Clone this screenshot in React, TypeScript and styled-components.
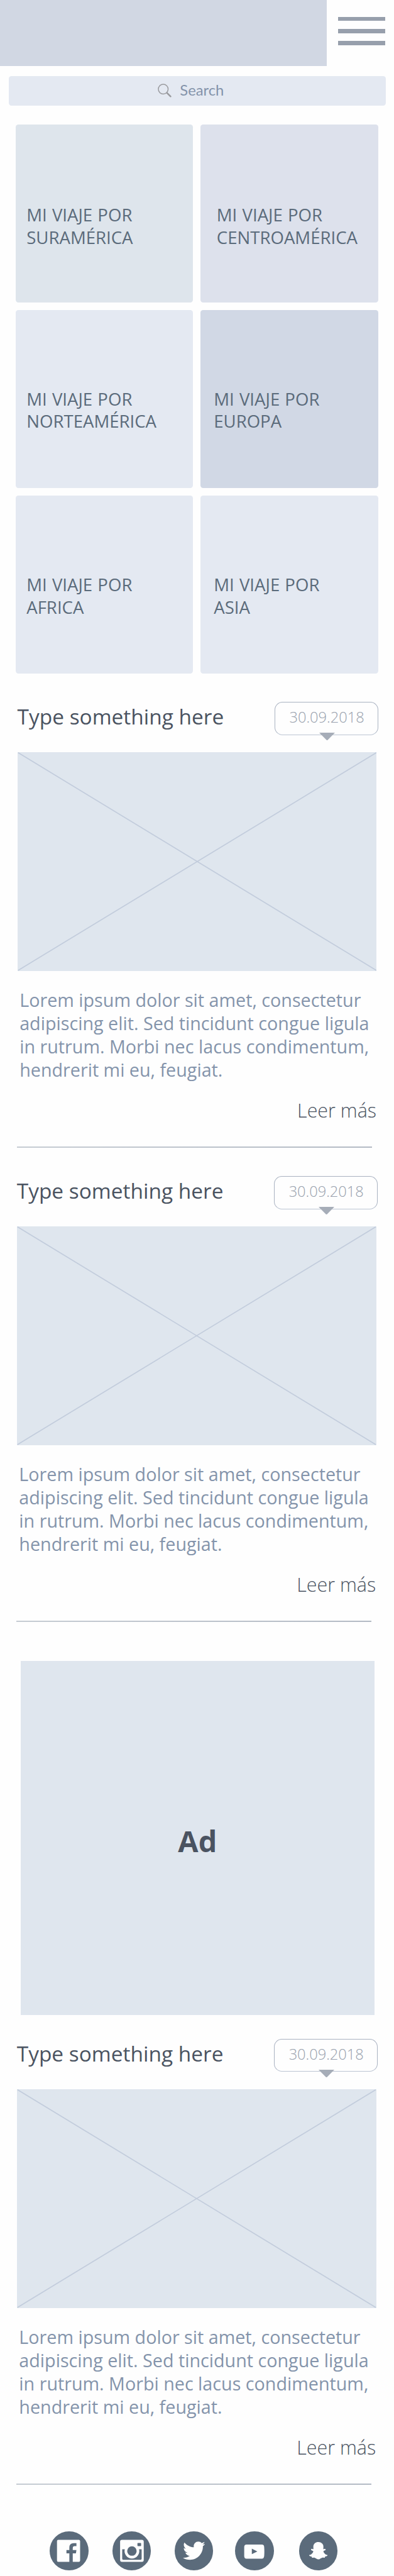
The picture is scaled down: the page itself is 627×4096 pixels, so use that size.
import React from "react";
import styled, { createGlobalStyle } from "styled-components";
import { FaTwitter, FaSnapchatGhost } from "react-icons/fa";

/* Design units are for a 750-wide artboard, drawn on a 627px page. */
const u = (n: number) => `${+(n * 0.836).toFixed(3)}px`;

const GlobalStyle = createGlobalStyle`
  * { box-sizing: border-box; }
  body { margin: 0; background: #fefefe; font-family: "Open Sans", "Noto Sans", sans-serif; }
  h1, h2, p { margin: 0; font-weight: 400; }
`;

const Page = styled.div`
  width: 627px;
  height: 4096px;
  overflow: hidden;
  background: #fefefe;
`;

const Header = styled.header`
  display: flex;
  height: ${u(126)};
`;

const Banner = styled.div`
  width: ${u(622)};
  background: #d1d7e3;
`;

const MenuButton = styled.button`
  display: flex;
  flex-direction: column;
  gap: ${u(15)};
  margin: 0 0 0 ${u(21)};
  padding: ${u(32)} 0 0;
  width: ${u(90)};
  border: 0;
  background: none;
`;

const MenuBar = styled.span`
  height: ${u(8)};
  background: #979fac;
`;

const SearchBar = styled.div`
  display: flex;
  align-items: center;
  width: ${u(717)};
  height: ${u(55.5)};
  margin: ${u(19)} 0 0 ${u(17)};
  padding-left: ${u(283.5)};
  border-radius: ${u(5)};
  background: #e4e9f2;
`;

const SearchIcon = styled.svg`
  width: ${u(27)};
  height: ${u(27)};
  fill: none;
  stroke: #9a9b9f;
`;

const SearchLabel = styled.span`
  margin: 0 0 ${u(3.5)} ${u(15)};
  font-family: Lato, "Open Sans", sans-serif;
  font-size: ${u(28.5)};
  line-height: ${u(50)};
  color: #8494ab;
`;

const Tiles = styled.nav`
  display: grid;
  grid-template-columns: ${u(338)} ${u(338)};
  grid-auto-rows: ${u(338)};
  column-gap: ${u(14.5)};
  row-gap: ${u(15)};
  margin: ${u(36.5)} 0 0 ${u(29.5)};
`;

const Tile = styled.a<{ $bg: string; $left: number; $top: number }>`
  padding: ${(p) => u(p.$top)} 0 0 ${(p) => u(p.$left)};
  border-radius: ${u(5)};
  background: ${(p) => p.$bg};
  color: #5b6b7b;
  font-size: ${u(33)};
  line-height: ${u(42.2)};
  word-spacing: ${u(1.2)};
  white-space: pre-line;
`;

const Article = styled.article<{ $gap: number; $shift?: number }>`
  margin: ${(p) => u(p.$gap)} 0 0 ${(p) => u(33 - (p.$shift || 0))};
  width: ${u(687)};
`;

const ArticleHead = styled.div`
  display: flex;
  justify-content: space-between;
  height: ${u(96)};
`;

const Title = styled.h2`
  font-size: ${u(40)};
  line-height: ${u(55)};
  color: #4a5361;
  white-space: nowrap;
`;

const DateBadge = styled.div`
  position: relative;
  width: ${u(197)};
  height: ${u(63)};
  padding-left: ${u(26.6)};
  border: 1px solid #a9b2c1;
  border-bottom-color: #bcc5d3;
  border-radius: ${u(15)};
  font-size: ${u(28.3)};
  font-weight: 300;
  line-height: ${u(56)};
  color: #979fac;
`;

const Pointer = styled.svg`
  position: absolute;
  left: ${u(83.5)};
  top: ${u(58)};
  width: ${u(30)};
  height: ${u(15)};
  fill: #a6adb8;
`;

const Picture = styled.svg`
  display: block;
  width: ${u(684)};
  height: ${u(416)};
  background: #dfe6ee;
  stroke: #c2ccdc;
  stroke-width: 2;
`;

const Excerpt = styled.p`
  margin: ${u(34)} 0 0 ${u(4.3)};
  font-size: ${u(34.35)};
  line-height: ${u(44)};
  color: #8494ab;
  white-space: pre;
`;

const ReadMore = styled.a`
  display: block;
  margin-top: ${u(30.5)};
  padding-right: ${u(3.5)};
  font-size: ${u(36.4)};
  font-weight: 300;
  line-height: ${u(49)};
  text-align: right;
  color: #4a5361;
`;

const Divider = styled.hr`
  width: ${u(676)};
  height: ${u(2)};
  margin: ${u(44.5)} 0 0 ${u(-1)};
  border: 0;
  background: linear-gradient(90deg, #c6ccd3, #b3bac4);
`;

const Ad = styled.aside`
  display: flex;
  align-items: center;
  justify-content: center;
  width: ${u(674)};
  height: ${u(674)};
  margin: ${u(74)} 0 0 ${u(39)};
  padding-top: ${u(10.6)};
  background: #dfe6ee;
  color: #4a5361;
  font-size: ${u(56)};
  font-weight: 700;
`;

const Social = styled.footer`
  display: flex;
  margin: ${u(89)} 0 0 ${u(95)};
`;

const SocialLink = styled.a<{ $gap?: number }>`
  display: flex;
  align-items: center;
  justify-content: center;
  width: ${u(74)};
  height: ${u(74)};
  margin-left: ${(p) => u(p.$gap || 0)};
  border-radius: 50%;
  background: #5b6b7b;
  color: #fefefe;
`;

const Glyph = styled.svg`
  width: ${u(74)};
  height: ${u(74)};
  fill: #fefefe;
`;

const tiles = [
  { text: "MI VIAJE POR\nSURAMÉRICA", bg: "#dee5ec", left: 21, top: 151 },
  { text: "MI VIAJE POR\nCENTROAMÉRICA", bg: "#dde1ec", left: 30.5, top: 151 },
  { text: "MI VIAJE POR\nNORTEAMÉRICA", bg: "#e4e9f2", left: 21, top: 148 },
  { text: "MI VIAJE POR\nEUROPA", bg: "#d1d8e5", left: 25, top: 148 },
  { text: "MI VIAJE POR\nAFRICA", bg: "#e4e9f2", left: 21, top: 148.5 },
  { text: "MI VIAJE POR\nASIA", bg: "#e4e9f2", left: 25, top: 148.5 },
];

const lorem =
  "Lorem ipsum dolor sit amet, consectetur\nadipiscing elit. Sed tincidunt congue ligula\nin rutrum. Morbi nec lacus condimentum,\nhendrerit mi eu, feugiat.";

function Post({ gap, shift }: { gap: number; shift?: number }) {
  return (
    <Article $gap={gap} $shift={shift}>
      <ArticleHead>
        <Title>Type something here</Title>
        <DateBadge>
          30.09.2018
          <Pointer viewBox="0 0 30 15">
            <path d="M0 0H30L16 14Q15 15 14 14Z" />
          </Pointer>
        </DateBadge>
      </ArticleHead>
      <Picture viewBox="0 0 684 416" preserveAspectRatio="none">
        <line x1="1" y1="1" x2="683" y2="415" />
        <line x1="683" y1="1" x2="1" y2="415" />
      </Picture>
      <Excerpt>{lorem}</Excerpt>
      <ReadMore>Leer más</ReadMore>
      <Divider />
    </Article>
  );
}

export default function App() {
  return (
    <Page>
      <GlobalStyle />
      <Header>
        <Banner />
        <MenuButton aria-label="Menu">
          <MenuBar />
          <MenuBar />
          <MenuBar />
        </MenuButton>
      </Header>
      <SearchBar>
        <SearchIcon viewBox="0 0 27 27">
          <circle cx="10.5" cy="10.5" r="9.3" strokeWidth="1.8" />
          <path d="M17.5 17.5L24.500 24.500" strokeWidth="3" strokeLinecap="round" />
        </SearchIcon>
        <SearchLabel>Search</SearchLabel>
      </SearchBar>
      <Tiles>
        {tiles.map((t) => (
          <Tile key={t.text} $bg={t.bg} $left={t.left} $top={t.top}>
            {t.text}
          </Tile>
        ))}
      </Tiles>
      <Post gap={54} />
      <Post gap={54} shift={1} />
      <Ad>Ad</Ad>
      <Post gap={45} shift={1} />
      <Social>
        <SocialLink aria-label="Facebook">
          <Glyph viewBox="0 0 74 74">
            <path d="M16.5 16H55.5Q58 16 58 18.5V55.5Q58 58 55.5 58H44V42H50L51 35.5H44V32Q44 28 47.5 28H51V22.5H46Q37.5 22.5 37.5 31V35.5H32V42H37.5V58H16.5Q14 58 14 55.5V18.5Q14 16 16.5 16Z" />
          </Glyph>
        </SocialLink>
        <SocialLink aria-label="Instagram" $gap={44.7}>
          <Glyph viewBox="0 0 74 74">
            <path
              fillRule="evenodd"
              d="M18 16H56Q59.5 16 59.5 19.5V54.5Q59.5 58 56 58H18Q14.5 58 14.5 54.5V19.5Q14.5 16 18 16ZM18.5 34V52Q18.5 54 20.5 54H53.5Q55.5 54 55.5 52V34H50.5A14 14 0 1 1 23.5 34ZM48.5 22Q47.5 22 47.5 23V27Q47.5 28 48.5 28H53.5Q54.5 28 54.5 27V23Q54.5 22 53.5 22ZM37 28.5A9 9 0 1 0 37 46.5A9 9 0 1 0 37 28.5Z"
            />
          </Glyph>
        </SocialLink>
        <SocialLink aria-label="Twitter" $gap={44.3}>
          <FaTwitter size={35.5} />
        </SocialLink>
        <SocialLink aria-label="YouTube" $gap={42}>
          <Glyph viewBox="0 0 74 74">
            <path
              fillRule="evenodd"
              d="M22 25H51Q55.5 25 55.5 30Q56.2 38.5 55.5 47Q55 52 51 52H22Q17.5 52 17.5 47V30Q17.5 25 22 25ZM32 33V43.5L42.5 38.2Z"
            />
          </Glyph>
        </SocialLink>
        <SocialLink aria-label="Snapchat" $gap={47}>
          <FaSnapchatGhost size={29.3} />
        </SocialLink>
      </Social>
    </Page>
  );
}
